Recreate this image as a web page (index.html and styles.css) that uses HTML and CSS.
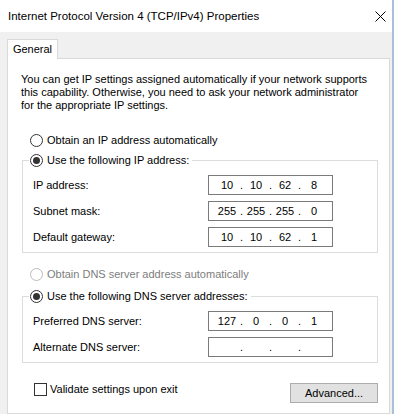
FILE: index.html
```html
<!DOCTYPE html>
<html>
<head>
<meta charset="utf-8">
<link rel="stylesheet" href="styles.css">
</head>
<body>
<div class="window">
  <div class="titlebar">
    <span class="title">Internet Protocol Version 4 (TCP/IPv4) Properties</span>
    <svg class="close" width="11" height="11" viewBox="0 0 11 11"><path d="M0.5 0.5 L10.5 10.5 M10.5 0.5 L0.5 10.5" stroke="#000" stroke-width="1" fill="none"/></svg>
  </div>
  <div class="body">
    <div class="tab">General</div>
    <div class="panel">
      <p class="intro">You can get IP settings assigned automatically if your network supports<br>this capability. Otherwise, you need to ask your network administrator<br>for the appropriate IP settings.</p>
      <div class="radio-row first"><span class="rb"></span>Obtain an IP address automatically</div>
      <fieldset class="group">
        <legend><span class="rb checked"></span>Use the following IP address:</legend>
        <div class="row"><span class="lbl">IP address:</span><div class="ip"><span class="oct">10</span><span class="dot">.</span><span class="oct">10</span><span class="dot">.</span><span class="oct">62</span><span class="dot">.</span><span class="oct">8</span></div></div>
        <div class="row"><span class="lbl">Subnet mask:</span><div class="ip"><span class="oct">255</span><span class="dot">.</span><span class="oct">255</span><span class="dot">.</span><span class="oct">255</span><span class="dot">.</span><span class="oct">0</span></div></div>
        <div class="row"><span class="lbl">Default gateway:</span><div class="ip"><span class="oct">10</span><span class="dot">.</span><span class="oct">10</span><span class="dot">.</span><span class="oct">62</span><span class="dot">.</span><span class="oct">1</span></div></div>
      </fieldset>
      <div class="radio-row disabled"><span class="rb"></span>Obtain DNS server address automatically</div>
      <fieldset class="group second">
        <legend><span class="rb checked"></span>Use the following DNS server addresses:</legend>
        <div class="row"><span class="lbl">Preferred DNS server:</span><div class="ip"><span class="oct">127</span><span class="dot">.</span><span class="oct">0</span><span class="dot">.</span><span class="oct">0</span><span class="dot">.</span><span class="oct">1</span></div></div>
        <div class="row"><span class="lbl">Alternate DNS server:</span><div class="ip"><span class="oct"></span><span class="dot">.</span><span class="oct"></span><span class="dot">.</span><span class="oct"></span><span class="dot">.</span><span class="oct"></span></div></div>
      </fieldset>
      <div class="bottom">
        <div class="check-row"><span class="cb"></span>Validate settings upon exit</div>
        <div class="button">Advanced...</div>
      </div>
    </div>
  </div>
</div>
</body>
</html>
```
FILE: styles.css
```css
html, body {
  margin: 0;
  padding: 0;
  background: #ffffff;
}
body {
  font-family: "Liberation Sans", Arial, sans-serif;
  font-size: 11px;
  color: #000;
}
.window {
  width: 392px;
  height: 414px;
  border-right: 2px solid #a9c0d8;
  overflow: hidden;
  display: flex;
  flex-direction: column;
  background: #fff;
}
.titlebar {
  height: 32px;
  flex: none;
  display: flex;
  align-items: center;
  padding-left: 8px;
  background: #fff;
}
.title {
  font-size: 11.5px;
  line-height: 14px;
}
.close {
  margin-left: auto;
  margin-right: 6px;
  display: block;
}
.body {
  flex: 1;
  background: #f0f0f0;
  padding: 7px 2px 0 7px;
  display: flex;
  flex-direction: column;
}
.tab {
  align-self: flex-start;
  width: 51px;
  height: 20px;
  box-sizing: border-box;
  border: 1px solid #d9d9d9;
  border-bottom: none;
  background: #fff;
  text-align: center;
  line-height: 19px;
  margin-bottom: -1px;
  position: relative;
  z-index: 1;
}
.panel {
  flex: 1;
  background: #fff;
  border: 1px solid #d9d9d9;
  padding: 14px 0 0 13px;
}
.intro {
  margin: 0;
  line-height: 13px;
}
.radio-row {
  display: flex;
  align-items: center;
  height: 14px;
  margin-left: 9px;
  gap: 4px;
}
.radio-row.first {
  margin-top: 21px;
}
.radio-row.disabled {
  margin-top: 14px;
  color: #7d7d7d;
}
.radio-row.disabled .rb {
  border-color: #bcbcbc;
}
.rb {
  width: 13px;
  height: 13px;
  box-sizing: border-box;
  border: 1px solid #333;
  border-radius: 50%;
  background: #fff;
  display: flex;
  align-items: center;
  justify-content: center;
  flex: none;
}
.rb.checked::after {
  content: "";
  width: 7px;
  height: 7px;
  border-radius: 50%;
  background: #333;
}
.group {
  margin: 6px 0 0 1px;
  width: 356px;
  box-sizing: border-box;
  border: 1px solid #dcdcdc;
  padding: 8px 0 5px 0;
  min-inline-size: 0;
}
.group.second {
  margin-top: 8px;
}
.group legend {
  display: flex;
  align-items: center;
  gap: 4px;
  height: 14px;
  padding: 0 3px 0 1px;
  margin-left: 6px;
  background: #fff;
}
.row {
  display: flex;
  align-items: center;
  height: 20px;
  padding-left: 10px;
}
.row + .row {
  margin-top: 6px;
}
.lbl {
  width: 175px;
  flex: none;
}
.ip {
  width: 125px;
  height: 20px;
  box-sizing: border-box;
  border: 1px solid #7a7a7a;
  background: #fff;
  display: flex;
  align-items: center;
  padding: 0 6px;
}
.oct {
  width: 24px;
  text-align: center;
}
.dot {
  width: 5px;
  text-align: center;
}
.bottom {
  width: 357px;
  margin-top: 19px;
  display: flex;
  align-items: flex-start;
  justify-content: space-between;
}
.check-row {
  display: flex;
  align-items: center;
  height: 14px;
  gap: 3px;
  margin-left: 13px;
}
.cb {
  width: 13px;
  height: 13px;
  box-sizing: border-box;
  border: 1px solid #333;
  background: #fff;
}
.button {
  width: 88px;
  height: 20px;
  box-sizing: border-box;
  border: 1px solid #adadad;
  background: #e1e1e1;
  text-align: center;
  line-height: 18px;
  margin-top: 1px;
}
```
